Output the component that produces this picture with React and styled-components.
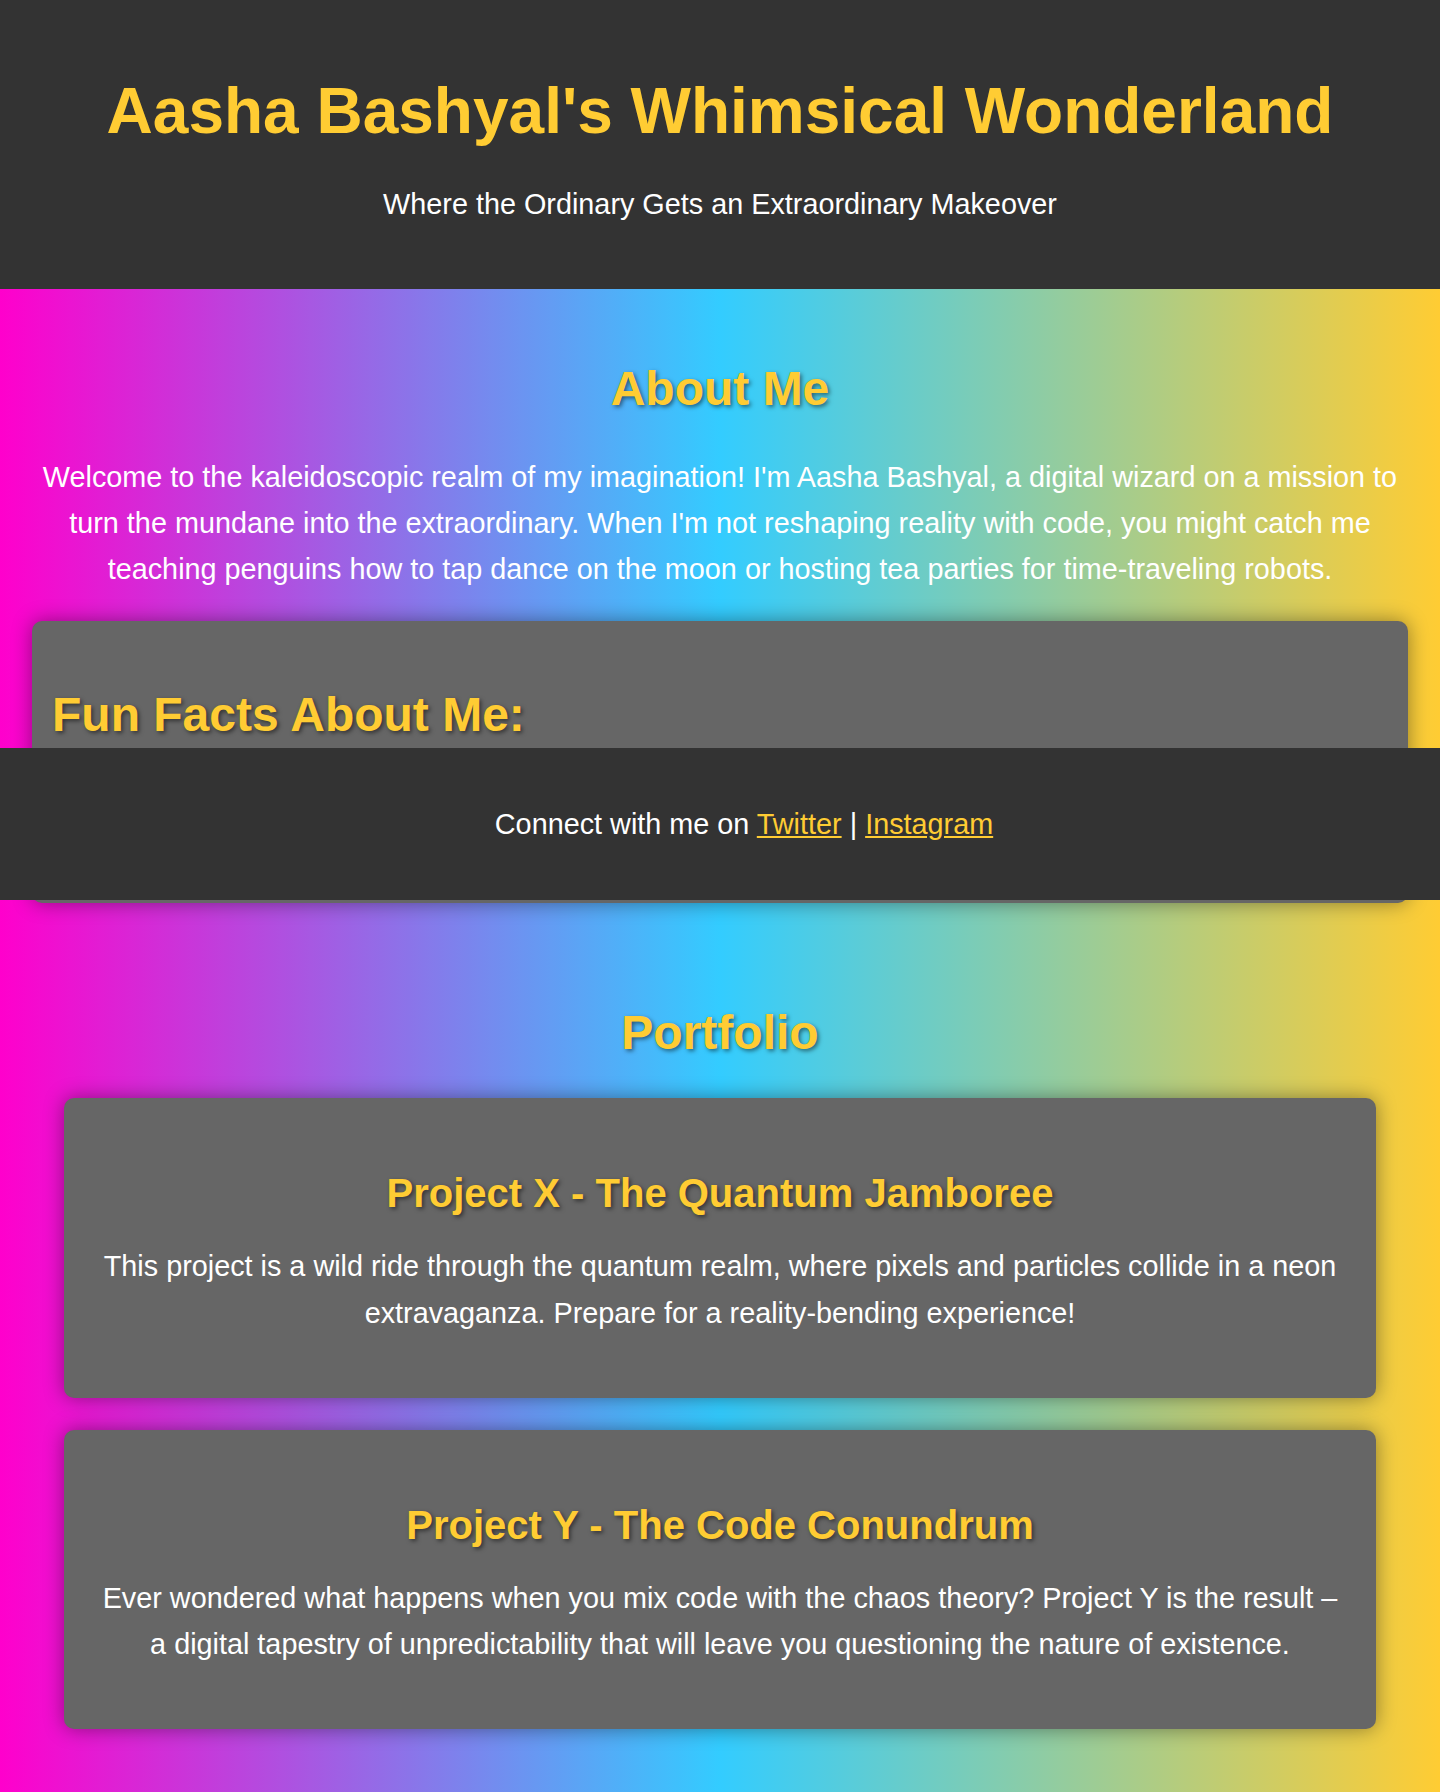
import React from "react";
import styled, { createGlobalStyle } from "styled-components";

const GlobalStyle = createGlobalStyle`
  html, body {
    margin: 0;
    padding: 0;
  }
  body {
    font-family: "Liberation Sans", Arial, sans-serif;
    color: #ffffff;
    background: #333333;
  }
  * { box-sizing: border-box; }
`;

const Page = styled.div`
  position: relative;
  min-height: 1792px;
`;

const Header = styled.header`
  background: #333333;
  text-align: center;
  padding: 75px 20px 62px;
`;

const Title = styled.h1`
  margin: 0;
  font-size: 64px;
  line-height: 73.6px;
  font-weight: 700;
  color: #ffcc33;
`;

const Tagline = styled.p`
  margin: 32px 0 0;
  font-size: 28.8px;
  line-height: 46px;
`;

const Main = styled.main`
  background: linear-gradient(to right, #ff00cc, #33ccff, #ffcc33);
`;

const Section = styled.section`
  padding: 32px;
  text-align: center;
`;

const SectionTitle = styled.h2`
  margin: ${(p) => p.$top || 40}px 0 ${(p) => p.$gap || 38}px;
  font-size: 48px;
  line-height: 55.2px;
  font-weight: 700;
  color: #ffcc33;
  text-shadow: 2px 2px 4px rgba(0, 0, 0, 0.5);
`;

const Text = styled.p`
  margin: 0 0 ${(p) => p.$bottom || 0}px;
  font-size: 28.8px;
  line-height: 46.08px;
`;

const FactsCard = styled.div`
  background: #666666;
  border-radius: 10px;
  box-shadow: 0 0 20px rgba(0, 0, 0, 0.4);
  padding: 20px 20px 161px;
  text-align: left;
`;

const FactsTitle = styled.h2`
  margin: 46px 0 0;
  font-size: 48px;
  line-height: 55.2px;
  font-weight: 700;
  color: #ffcc33;
  text-shadow: 2px 2px 4px rgba(0, 0, 0, 0.5);
`;

const ProjectCard = styled.article`
  background: #666666;
  border-radius: 10px;
  box-shadow: 0 0 20px rgba(0, 0, 0, 0.4);
  margin: 0 32px 32px;
  padding: 72px 32px 62px;
  text-align: center;
`;

const ProjectTitle = styled.h3`
  margin: 0 0 27px;
  font-size: 40px;
  line-height: 46px;
  font-weight: 700;
  color: #ffcc33;
  text-shadow: 2px 2px 4px rgba(0, 0, 0, 0.5);
`;

const Footer = styled.footer`
  position: absolute;
  left: 0;
  right: 0;
  top: 748px;
  height: 152px;
  padding-left: 48px;
  background: #333333;
  display: flex;
  align-items: center;
  justify-content: center;
  font-size: 28.8px;
  line-height: 46px;
  z-index: 2;
`;

const Link = styled.a`
  color: #ffcc33;
  text-decoration: underline;
`;

const projects = [
  {
    title: "Project X - The Quantum Jamboree",
    text: "This project is a wild ride through the quantum realm, where pixels and particles collide in a neon extravaganza. Prepare for a reality-bending experience!",
  },
  {
    title: "Project Y - The Code Conundrum",
    text: "Ever wondered what happens when you mix code with the chaos theory? Project Y is the result – a digital tapestry of unpredictability that will leave you questioning the nature of existence.",
  },
];

export default function App() {
  return (
    <Page>
      <GlobalStyle />
      <Header>
        <Title>Aasha Bashyal's Whimsical Wonderland</Title>
        <Tagline>Where the Ordinary Gets an Extraordinary Makeover</Tagline>
      </Header>
      <Main>
        <Section>
          <SectionTitle>About Me</SectionTitle>
          <Text $bottom={29}>
            Welcome to the kaleidoscopic realm of my imagination! I'm Aasha
            Bashyal, a digital wizard on a mission to turn the mundane into the
            extraordinary. When I'm not reshaping reality with code, you might
            catch me teaching penguins how to tap dance on the moon or hosting
            tea parties for time-traveling robots.
          </Text>
          <FactsCard>
            <FactsTitle>Fun Facts About Me:</FactsTitle>
          </FactsCard>
        </Section>
        <Section>
          <SectionTitle $top={38} $gap={38}>Portfolio</SectionTitle>
          {projects.map((p) => (
            <ProjectCard key={p.title}>
              <ProjectTitle>{p.title}</ProjectTitle>
              <Text>{p.text}</Text>
            </ProjectCard>
          ))}
        </Section>
      </Main>
      <Footer>
        <span>
          Connect with me on <Link href="#">Twitter</Link> |{" "}
          <Link href="#">Instagram</Link>
        </span>
      </Footer>
    </Page>
  );
}
